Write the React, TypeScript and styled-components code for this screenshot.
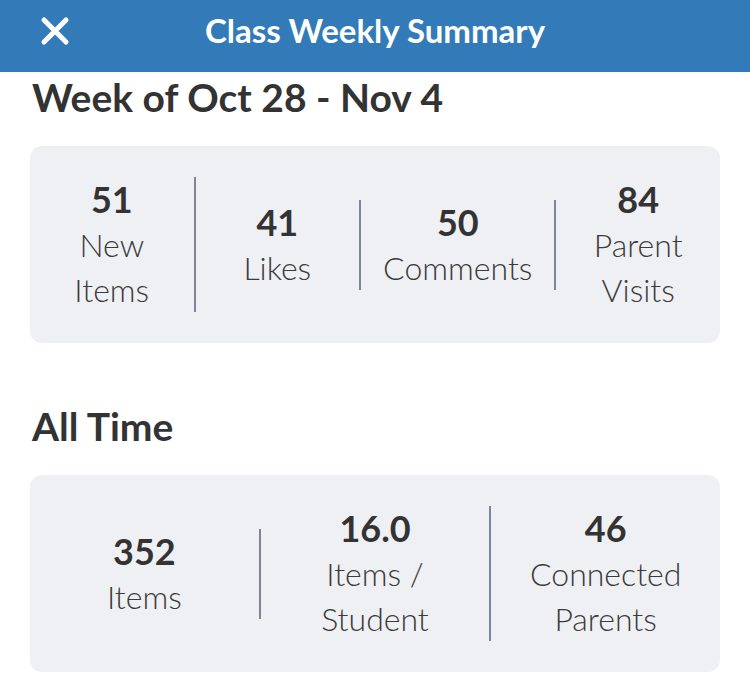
import styled, { createGlobalStyle } from 'styled-components';

const GlobalStyle = createGlobalStyle`
  html, body {
    margin: 0;
    padding: 0;
    background: #ffffff;
    font-family: 'Lato', 'Noto Sans', sans-serif;
    color: #333333;
  }
`;

type Stat = {
  value: string;
  label: string[];
};

const weekStats: Stat[] = [
  { value: '51', label: ['New', 'Items'] },
  { value: '41', label: ['Likes'] },
  { value: '50', label: ['Comments'] },
  { value: '84', label: ['Parent', 'Visits'] },
];

const allTimeStats: Stat[] = [
  { value: '352', label: ['Items'] },
  { value: '16.0', label: ['Items /', 'Student'] },
  { value: '46', label: ['Connected', 'Parents'] },
];

const CloseIcon = () => (
  <svg width="30" height="30" viewBox="0 0 30 30" fill="none">
    <path
      d="M4 4 L26 26 M26 4 L4 26"
      stroke="#ffffff"
      strokeWidth="5"
      strokeLinecap="round"
    />
  </svg>
);

const StatCard = ({ stats }: { stats: Stat[] }) => (
  <Card>
    {stats.map((s, i) => (
      <StatItem key={s.value} $last={i === stats.length - 1}>
        <Value>{s.value}</Value>
        {s.label.map((line) => (
          <Label key={line}>{line}</Label>
        ))}
      </StatItem>
    ))}
  </Card>
);

export default function App() {
  return (
    <>
      <GlobalStyle />
      <Header>
        <CloseButton aria-label="Close">
          <CloseIcon />
        </CloseButton>
        <Title>Class Weekly Summary</Title>
      </Header>
      <Content>
        <Heading>Week of Oct 28 - Nov 4</Heading>
        <StatCard stats={weekStats} />
        <Heading $spaced>All Time</Heading>
        <StatCard stats={allTimeStats} />
      </Content>
    </>
  );
}

const Header = styled.header`
  position: relative;
  height: 72px;
  background: #337ab8;
  display: flex;
  align-items: center;
  justify-content: center;
`;

const CloseButton = styled.button`
  position: absolute;
  left: 38px;
  top: 15px;
  width: 34px;
  height: 32px;
  padding: 0;
  border: none;
  background: none;
  display: flex;
  align-items: center;
  justify-content: center;
  cursor: pointer;
`;

const Title = styled.h1`
  margin: 0 0 12px;
  font-size: 33px;
  font-weight: 700;
  color: #ffffff;
`;

const Content = styled.main`
  padding: 0 30px 0;
  display: flex;
  flex-direction: column;
`;

const Heading = styled.h2<{ $spaced?: boolean }>`
  margin: ${(p) => (p.$spaced ? '60px' : '2px')} 2px 26px;
  font-size: 39px;
  line-height: 46px;
  font-weight: 700;
  color: #333333;
`;

const Card = styled.section`
  background: #eff0f4;
  border-radius: 12px;
  padding: 31px 0;
  display: flex;
  align-items: center;
`;

const StatItem = styled.div<{ $last?: boolean }>`
  flex: 1 1 0;
  padding: 0 22px;
  display: flex;
  flex-direction: column;
  align-items: center;
  text-align: center;
  border-right: ${(p) => (p.$last ? 'none' : '2px solid #7b8797')};
`;

const Value = styled.div`
  font-size: 36px;
  line-height: 45px;
  font-weight: 700;
  color: #333333;
`;

const Label = styled.div`
  font-size: 32px;
  line-height: 45px;
  font-weight: 300;
  color: #3a3a3a;
  white-space: nowrap;
`;
